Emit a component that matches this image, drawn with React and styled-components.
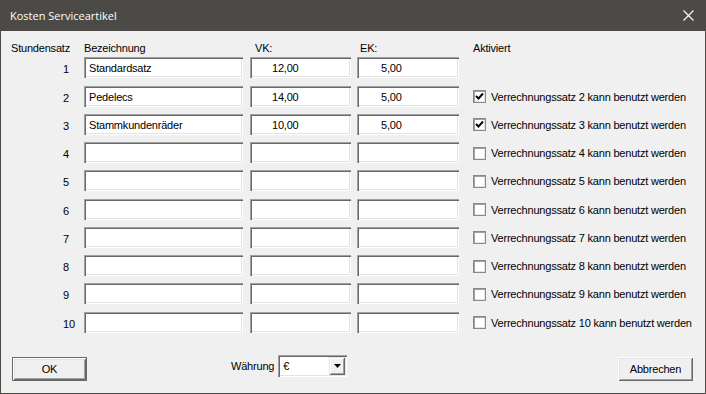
import React from 'react';
import styled, { createGlobalStyle } from 'styled-components';

const GlobalStyle = createGlobalStyle`
  html, body {
    margin: 0;
    padding: 0;
    background: #f0f0f0;
  }
  * {
    box-sizing: border-box;
  }
`;

const Window = styled.div`
  width: 706px;
  height: 394px;
  display: flex;
  flex-direction: column;
  background: #f0f0f0;
  border: 1px solid #4b4a47;
  border-top: none;
  font-family: 'Liberation Sans', Arial, sans-serif;
  font-size: 11px;
  letter-spacing: -0.2px;
  color: #000;
`;

const TitleBar = styled.div`
  height: 31px;
  margin: 0 -1px;
  background: #4b4a47;
  display: flex;
  align-items: center;
  justify-content: space-between;
  padding: 0 10px 0 10px;
  color: #fff;
  font-family: 'Open Sans', 'Noto Sans', sans-serif;
  font-size: 11px;
  letter-spacing: 0;
`;

const CloseButton = styled.div`
  width: 14px;
  height: 14px;
  display: flex;
  align-items: center;
  justify-content: center;
  margin-right: 1px;
`;

const Body = styled.div`
  flex: 1;
  display: flex;
  flex-direction: column;
`;

const Grid = styled.div`
  display: grid;
  grid-template-columns: 73px 166px 107px 116px 1fr;
  grid-template-rows: 19px;
  grid-auto-rows: 21px;
  row-gap: 7.25px;
  padding-left: 10px;
`;

const HeaderLabel = styled.div`
  padding-top: 10px;
  padding-left: ${(p) => p.indent || 0}px;
  line-height: 14px;
  white-space: nowrap;
`;

const RowNumber = styled.div`
  padding-left: 52px;
  padding-top: 5px;
  line-height: 14px;
`;

const Field = styled.div`
  width: ${(p) => p.w}px;
  height: 21px;
  background: #fff;
  box-shadow: inset 1px 1px #a0a0a0, inset 2px 2px #696969, inset -1px -1px #ffffff,
    inset -2px -2px #e3e3e3;
  padding-left: ${(p) => p.pad || 5}px;
  display: flex;
  align-items: center;
  padding-top: 1px;
  white-space: nowrap;
`;

const CheckRow = styled.label`
  display: flex;
  align-items: center;
  white-space: nowrap;
  margin-top: 1px;
`;

const Box = styled.span`
  width: 13px;
  height: 13px;
  background: #fff;
  box-shadow: inset 1px 1px #a0a0a0, inset -1px -1px #e3e3e3;
  border: 1px solid #8a8a8a;
  display: inline-flex;
  align-items: center;
  justify-content: center;
  margin-right: 5px;
`;

const Footer = styled.div`
  margin-top: auto;
  display: flex;
  align-items: flex-start;
  padding: 0 12px 12px 11px;
`;

const Button = styled.button`
  width: 75px;
  height: 24px;
  font: inherit;
  letter-spacing: inherit;
  color: #000;
  background: #f0f0f0;
  border: ${(p) => (p.primary ? '1px solid #696969' : 'none')};
  box-shadow: inset 1px 1px #ffffff, inset -1px -1px #696969, inset 2px 2px #e3e3e3,
    inset -2px -2px #a0a0a0;
  padding: 0;
`;

const Currency = styled.div`
  display: flex;
  align-items: center;
  margin-left: 144px;
  margin-top: -2px;
  gap: 4px;
`;

const Select = styled.div`
  width: 69px;
  height: 22px;
  background: #fff;
  box-shadow: inset 1px 1px #a0a0a0, inset 2px 2px #696969, inset -1px -1px #ffffff,
    inset -2px -2px #e3e3e3;
  display: flex;
  align-items: center;
  justify-content: space-between;
  padding: 2px 2px 2px 5px;
`;

const DropButton = styled.div`
  width: 16px;
  height: 18px;
  background: #f0f0f0;
  box-shadow: inset 1px 1px #e3e3e3, inset -1px -1px #696969, inset 2px 2px #ffffff,
    inset -2px -2px #a0a0a0;
  display: flex;
  align-items: center;
  justify-content: center;
`;

const Spacer = styled.div`
  flex: 1;
`;

const rows = [
  { name: 'Standardsatz', vk: '12,00', ek: '5,00' },
  { name: 'Pedelecs', vk: '14,00', ek: '5,00', checked: true },
  { name: 'Stammkundenräder', vk: '10,00', ek: '5,00', checked: true },
  {}, {}, {}, {}, {}, {}, {},
];

const Check = () => (
  <svg width="9" height="9" viewBox="0 0 9 9">
    <path d="M1 4 L3.5 6.5 L8 1.5" stroke="#000" strokeWidth="1.9" fill="none" />
  </svg>
);

export default function App() {
  return (
    <>
      <GlobalStyle />
      <Window>
        <TitleBar>
          <span>Kosten Serviceartikel</span>
          <CloseButton>
            <svg width="11" height="11" viewBox="0 0 11 11">
              <path d="M0.5 0.5 L10.5 10.5 M10.5 0.5 L0.5 10.5" stroke="#fff" strokeWidth="1.1" />
            </svg>
          </CloseButton>
        </TitleBar>
        <Body>
          <Grid>
            <HeaderLabel>Stundensatz</HeaderLabel>
            <HeaderLabel indent={0}>Bezeichnung</HeaderLabel>
            <HeaderLabel indent={5}>VK:</HeaderLabel>
            <HeaderLabel indent={3}>EK:</HeaderLabel>
            <HeaderLabel indent={-2}>Aktiviert</HeaderLabel>
            {rows.map((r, i) => (
              <React.Fragment key={i}>
                <RowNumber>{i + 1}</RowNumber>
                <div>
                  <Field w={159}>{r.name}</Field>
                </div>
                <div>
                  <Field w={101} pad={22}>{r.vk}</Field>
                </div>
                <div>
                  <Field w={102} pad={24}>{r.ek}</Field>
                </div>
                {i === 0 ? (
                  <div />
                ) : (
                  <CheckRow>
                    <Box>{r.checked && <Check />}</Box>
                    Verrechnungssatz {i + 1} kann benutzt werden
                  </CheckRow>
                )}
              </React.Fragment>
            ))}
          </Grid>
          <Footer>
            <Button primary>OK</Button>
            <Currency>
              <span>Währung</span>
              <Select>
                <span>€</span>
                <DropButton>
                  <svg width="7" height="4" viewBox="0 0 7 4">
                    <path d="M0 0 H7 L3.5 4 Z" fill="#000" />
                  </svg>
                </DropButton>
              </Select>
            </Currency>
            <Spacer />
            <Button>Abbrechen</Button>
          </Footer>
        </Body>
      </Window>
    </>
  );
}
